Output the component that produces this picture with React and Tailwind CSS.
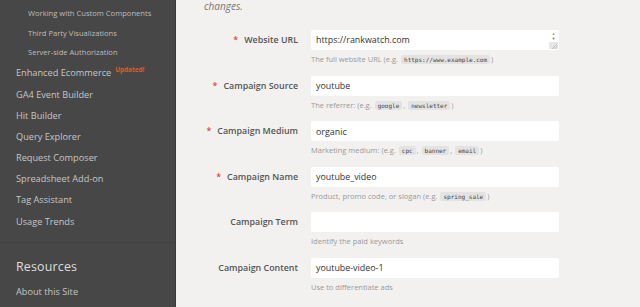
import React from "react";

const subItems = [
  "Working with Custom Components",
  "Third Party Visualizations",
  "Server-side Authorization",
];

const mainItems = [
  "GA4 Event Builder",
  "Hit Builder",
  "Query Explorer",
  "Request Composer",
  "Spreadsheet Add-on",
  "Tag Assistant",
  "Usage Trends",
];

const Code = ({ children }) => (
  <span className="mx-[1px] inline-block rounded-[2px] bg-[#e4e3e2] px-[3px] font-['DejaVu_Sans_Mono',monospace] text-[6px] leading-[9px] text-[#444]">
    {children}
  </span>
);

const fields = [
  {
    label: "Website URL",
    required: true,
    value: "https://rankwatch.com",
    textarea: true,
    help: (
      <>
        The full website URL (e.g. <Code>https://www.example.com</Code>)
      </>
    ),
  },
  {
    label: "Campaign Source",
    required: true,
    value: "youtube",
    help: (
      <>
        The referrer: (e.g. <Code>google</Code>, <Code>newsletter</Code>)
      </>
    ),
  },
  {
    label: "Campaign Medium",
    required: true,
    value: "organic",
    help: (
      <>
        Marketing medium: (e.g. <Code>cpc</Code>, <Code>banner</Code>,{" "}
        <Code>email</Code>)
      </>
    ),
  },
  {
    label: "Campaign Name",
    required: true,
    value: "youtube_video",
    help: (
      <>
        Product, promo code, or slogan (e.g. <Code>spring_sale</Code>)
      </>
    ),
  },
  {
    label: "Campaign Term",
    value: "",
    help: "Identify the paid keywords",
  },
  {
    label: "Campaign Content",
    value: "youtube-video-1",
    help: "Use to differentiate ads",
  },
];

const Sidebar = () => (
  <aside className="flex w-[176px] shrink-0 flex-col border-r border-[#3a3a3a] bg-[#474747]">
    {/* Nested tool docs */}
    <div className="pt-[4px]">
      {subItems.map((s) => (
        <div
          key={s}
          className="h-[19.5px] pl-[28px] text-[7.6px] leading-[19.5px] text-[#bdbdbd]"
        >
          {s}
        </div>
      ))}
    </div>
    <div className="flex h-[21px] items-center pl-[16px] text-[9.2px] text-[#c6c6c6]">
      Enhanced Ecommerce
      <span className="-mt-[7px] ml-[4px] text-[6.4px] font-bold text-[#e5572c]">
        Updated!
      </span>
    </div>
    {mainItems.map((m) => (
      <div
        key={m}
        className="h-[21.2px] pl-[16px] text-[9.2px] leading-[21.2px] text-[#c6c6c6]"
      >
        {m}
      </div>
    ))}
    {/* Resources */}
    <div className="mt-[10px] border-t border-[#404040] pt-[15px]">
      <div className="pl-[16px] text-[12.4px] leading-[18px] tracking-[0.2px] text-[#dedede]">
        Resources
      </div>
      <div className="mt-[9px] pl-[16px] text-[9.2px] leading-[14px] text-[#c6c6c6]">
        About this Site
      </div>
    </div>
  </aside>
);

const Field = ({ f }) => (
  <div className="flex h-[45.6px] items-start">
    <label className="w-[122px] shrink-0 text-right text-[8.9px] font-semibold leading-[20px] text-[#555]">
      {f.required && <span className="mr-[6px] text-[#d9464a]">*</span>}
      {f.label}
    </label>
    <div className="ml-[13px] w-[248px]">
      <div className="relative flex h-[20px] items-center rounded-[2px] bg-white pl-[5px] text-[8.9px] text-[#333]">
        {f.value}
        {f.textarea && (
          <div className="absolute right-[1px] top-[1px] flex h-[18px] w-[9px] flex-col items-center">
            <span className="mt-[1px] text-[4px] leading-[4px] text-[#999]">▲</span>
            <span className="mt-[1px] text-[4px] leading-[4px] text-[#777]">▼</span>
            <div className="mt-auto h-[7px] w-[9px] bg-[#e6e6e6]">
              <svg width="9" height="7" viewBox="0 0 9 7">
                <path d="M8 2 L3 7 M8 4.5 L5.5 7" stroke="#aaa" strokeWidth="0.7" />
              </svg>
            </div>
          </div>
        )}
      </div>
      <div className="mt-[3px] text-[7.5px] leading-[12px] text-[#999]">{f.help}</div>
    </div>
  </div>
);

export default function App() {
  return (
    <div className="flex h-[307px] w-[640px] overflow-hidden font-['Open_Sans',sans-serif]">
      <Sidebar />
      <main className="flex-1 bg-[#f2f1f0]">
        <p className="-mt-[1px] pl-[28px] text-[10px] italic leading-[14px] text-[#777]">
          changes.
        </p>
        <div className="mt-[17px]">
          {fields.map((f) => (
            <Field key={f.label} f={f} />
          ))}
        </div>
      </main>
    </div>
  );
}
